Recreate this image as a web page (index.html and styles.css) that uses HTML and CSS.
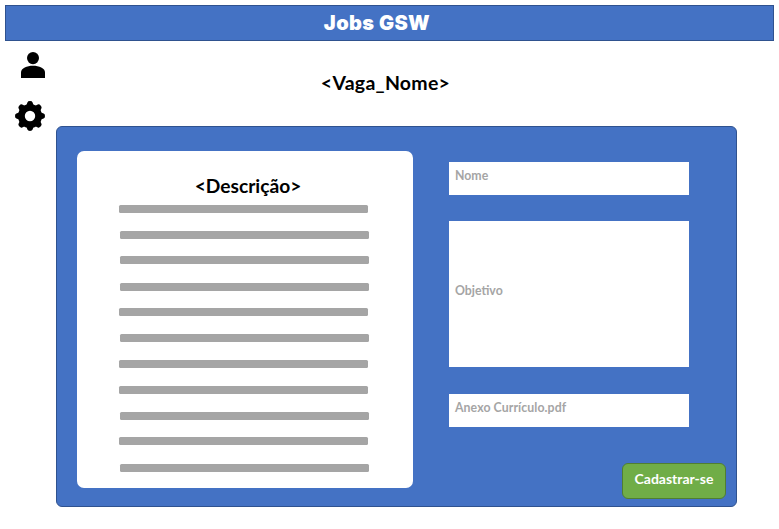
FILE: index.html
```html
<!DOCTYPE html>
<html lang="pt-BR">
<head>
<meta charset="utf-8">
<title>Jobs GSW</title>
<link rel="stylesheet" href="styles.css">
</head>
<body>
<header class="topbar"><h1 class="brand">Jobs GSW</h1></header>
<div class="layout">
  <nav class="rail">
    <svg class="user" viewBox="0 0 24 26" width="24" height="26"><ellipse cx="12" cy="6.1" rx="6" ry="6.1"/><path d="M0 26V20.500C0 16 6 13.700 12 13.700S24 16 24 20.500V26Z"/></svg>
    <svg class="gear" viewBox="-15 -15 30 30" width="30" height="30"><path fill-rule="evenodd" d="M0-12A12 12 0 1 1 0 12A12 12 0 1 1 0-12ZM0-5.200A5.200 5.200 0 1 0 0 5.200A5.200 5.200 0 1 0 0-5.200Z"/><g id="t"><path id="a" d="M-3.500-11L-2.600-13.600Q-2.200-15 0-15T2.600-13.600L3.500-11Z"/><use href="#a" transform="rotate(45)"/><use href="#a" transform="rotate(90)"/><use href="#a" transform="rotate(135)"/></g><use href="#t" transform="rotate(180)"/></svg>
  </nav>
  <main class="content">
    <h2 class="job">&lt;Vaga_Nome&gt;</h2>
    <section class="panel">
      <article class="card">
        <h3 class="heading">&lt;Descrição&gt;</h3>
        <ul class="lines">
          <li></li><li class="in"></li><li class="in up"></li><li class="in down"></li><li class="up"></li><li class="in"></li><li></li><li></li><li class="in"></li><li class="up"></li><li class="in down"></li>
        </ul>
      </article>
      <form class="form">
        <div class="field">Nome</div>
        <div class="field tall">Objetivo</div>
        <div class="field file">Anexo Currículo.pdf</div>
        <button class="submit" type="button">Cadastrar-se</button>
      </form>
    </section>
  </main>
</div>
</body>
</html>
```
FILE: styles.css
```css
* { box-sizing: border-box; margin: 0; padding: 0; }
body { padding: 5px; background: #fff; font-family: Lato, "Liberation Sans", sans-serif; font-weight: 700; color: #000; overflow: hidden; }
.topbar { width: 769px; height: 36px; background: #4472c4; border: 1px solid #2f528f; text-align: center; padding-right: 25px; }
.brand { font: 900 20px/34px Inter, sans-serif; letter-spacing: 0.4px; color: #fff; }
.layout { display: flex; }
.rail { width: 51px; padding: 11px 0 0 10px; }
.rail svg { display: block; }
.user { margin-left: 6px; }
.gear { margin-top: 23px; }
.content { width: 681px; }
.job { height: 85px; padding: 29px 22px 0 0; text-align: center; font-size: 19.500px; line-height: 25px; letter-spacing: 0.25px; }
.panel { display: flex; height: 381px; padding: 24px 10px 0 20px; background: #4472c4; border: 1px solid #2f528f; border-radius: 6px; }
.card { width: 336px; height: 337px; padding-top: 22px; background: #fff; border-radius: 7px; }
.heading { height: 32px; padding-left: 6px; text-align: center; font-size: 19.200px; line-height: 25px; }
.lines { list-style: none; padding-left: 42px; }
.lines li { width: 249px; height: 8px; margin-bottom: 18px; background: #a5a5a5; border-radius: 1.500px; }
.lines .in { margin-left: 1px; }
.lines .up { margin-top: -1px; }
.lines .down { margin-top: 19px; }
.form { display: flex; flex-direction: column; width: 277px; margin-left: 36px; padding-top: 11px; }
.field { width: 240px; height: 33px; padding: 5px 6px 3px; background: #fff; color: #a5a5a5; font-size: 12.300px; line-height: 18px; white-space: nowrap; }
.field + .field { margin-top: 27px; }
.field + .field.tall { display: flex; align-items: center; height: 146px; margin-top: 26px; padding-bottom: 12px; }
.file { letter-spacing: 0.08px; }
.submit { align-self: flex-end; width: 104px; height: 36px; margin-top: 36px; padding-bottom: 5px; background: #70ad47; border: 1px solid #507e32; border-radius: 6px; color: #fff; font: 700 14px/20px Lato, sans-serif; white-space: nowrap; }
```
